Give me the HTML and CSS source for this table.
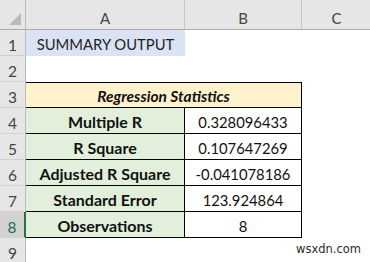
FILE: index.html
```html
<!DOCTYPE html>
<html>
<head>
<meta charset="utf-8">
<link rel="stylesheet" href="styles.css">
</head>
<body>
<div class="sheet">
  <div class="corner"><svg class="tri" width="14" height="14" viewBox="0 0 14 14"><polygon points="13,1 13,13 1,13" fill="#b9b9b9"/></svg></div>
  <div class="colhead">A</div>
  <div class="colhead">B</div>
  <div class="colhead last">C</div>

  <div class="rowhead">1</div>
  <div class="cell a1">SUMMARY OUTPUT</div>
  <div class="cell"></div>
  <div class="cell"></div>

  <div class="rowhead">2</div>
  <div class="cell"></div>
  <div class="cell"></div>
  <div class="cell"></div>

  <div class="rowhead">3</div>
  <div class="cell title">Regression Statistics</div>
  <div class="cell"></div>

  <div class="rowhead">4</div>
  <div class="cell label">Multiple R</div>
  <div class="cell value">0.328096433</div>
  <div class="cell"></div>

  <div class="rowhead">5</div>
  <div class="cell label">R Square</div>
  <div class="cell value">0.107647269</div>
  <div class="cell"></div>

  <div class="rowhead">6</div>
  <div class="cell label">Adjusted R Square</div>
  <div class="cell value">-0.041078186</div>
  <div class="cell"></div>

  <div class="rowhead">7</div>
  <div class="cell label">Standard Error</div>
  <div class="cell value">123.924864</div>
  <div class="cell"></div>

  <div class="rowhead selected">8</div>
  <div class="cell label">Observations</div>
  <div class="cell value">8</div>
  <div class="cell"></div>

  <div class="rowhead">9</div>
  <div class="cell"></div>
  <div class="cell"></div>
  <div class="cell"></div>
</div>
<div class="watermark">wsxdn.com</div>
</body>
</html>
```

FILE: styles.css
```css
* { box-sizing: border-box; }
html, body {
  margin: 0;
  padding: 0;
  background: #ffffff;
  width: 370px;
  height: 262px;
  overflow: hidden;
}
body { position: relative; }
.sheet {
  display: grid;
  grid-template-columns: 26px 159px 117px 69px;
  grid-template-rows: 30px repeat(9, 26px);
  font-family: Lato, "Open Sans", sans-serif;
  font-size: 14.8px;
  color: #111;
}
.corner {
  background: #e6e6e6;
  border-right: 1px solid #bdbdbd;
  border-bottom: 1px solid #ababab;
  position: relative;
}
.tri { position: absolute; right: 3px; bottom: 3px; }
.colhead {
  background: #e6e6e6;
  border-right: 1px solid #c6c6c6;
  border-bottom: 1px solid #ababab;
  display: flex;
  align-items: center;
  justify-content: center;
  padding-top: 6px;
  color: #444;
  font-size: 15px;
}
.colhead.last { border-right: none; }
.rowhead {
  background: #e6e6e6;
  border-right: 1px solid #bdbdbd;
  border-bottom: 1px solid #d0d0d0;
  display: flex;
  align-items: center;
  justify-content: center;
  padding-top: 4px;
  color: #444;
  font-size: 15.5px;
}
.rowhead.selected {
  background: #d2d2d2;
  color: #217346;
  border-right: 2px solid #217346;
}
.cell {
  display: flex;
  align-items: center;
  justify-content: center;
  padding-top: 2px;
  white-space: nowrap;
}
.a1 { background: #dae3f3; color: #1f1f1f; }
.title {
  grid-column: span 2;
  background: #fff2cc;
  font-weight: bold;
  font-style: italic;
  font-size: 15.5px;
  border-top: 1px solid #000;
  border-right: 1px solid #000;
  border-bottom: 1px solid #000;
}
.label {
  background: #e2efda;
  font-weight: bold;
  font-size: 16px;
  border-right: 1px solid #000;
  border-bottom: 1px solid #000;
}
.value {
  border-right: 1px solid #000;
  border-bottom: 1px solid #000;
}
.watermark {
  position: absolute;
  left: 296px;
  top: 242px;
  font-family: "DejaVu Sans", sans-serif;
  font-size: 11.5px;
  color: #2a2a2a;
}
```
